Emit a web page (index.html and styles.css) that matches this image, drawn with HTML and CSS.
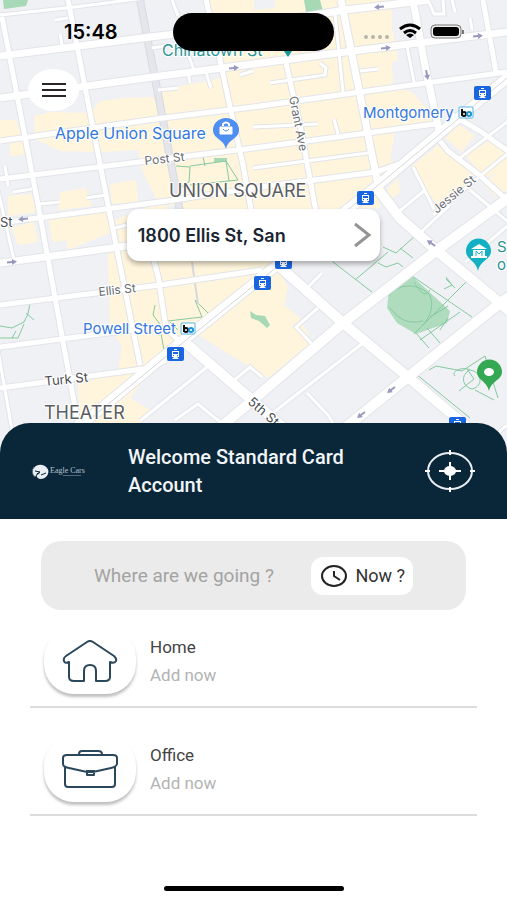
FILE: index.html
```html
<!DOCTYPE html>
<html lang="en">
<head>
  <meta charset="UTF-8" />
  <meta name="viewport" content="width=device-width, initial-scale=1.0"/>
  <title>Eagle Cars</title>
  <link rel="stylesheet" href="styles.css">
</head>
<body>
  <div class="app">
    <section class="map">
      <svg class="map-canvas" viewBox="0 0 507 450" preserveAspectRatio="xMidYMid slice" role="img" aria-label="Map">
        <defs>
          <g id="roads">
            <!-- west to east -->
            <path class="small" d="M0 15L75 7L145 -2"/>
            <path class="wide" d="M0 56L150 37L253 25L345 10L430 0"/>
            <path class="wide" d="M0 98L153 77L253 64L353 51L507 32"/>
            <path class="mid" d="M0 141L163 118L253 107L353 93L507 72"/>
            <path class="mid" d="M0 179L254 148L435 124"/>
            <path class="mid" d="M0 223L167 201L253 188L376 172L410 160"/>
            <path class="wide" d="M0 263L127 246L253 228L340 216"/>
            <path class="mid" d="M0 305L160 285L262 270"/>
            <path class="mid" d="M0 347L100 334L140 329"/>
            <path class="mid" d="M0 388L150 368L166 360"/>
            <path class="small" d="M253 127L318 124M253 168L368 153M152 48L165 46M253 71L240 75"/>
            <path class="small" d="M13 192L32 189M40 204L60 202M86 198L106 195M158 90L178 88M55 20L68 18M60 34L62 45M270 83L325 75L326 68L320 63M360 71L378 69"/>
            <path class="small" d="M188 72L190 83M206 72L211 88M188 54L194 70M334 119L338 134M428 0L434 14L444 14L443 0M452 0L455 12M470 18L472 30M115 228L127 225"/>
            <!-- north to south -->
            <path class="mid" d="M2 17L40 215L78 424"/>
            <path class="small" d="M-2 190L14 260M-2 350L12 430M5 166L8 186"/>
            <path class="mid" d="M68 0L110 215L140 365"/>
            <path class="mid" d="M143 220L158 276L166 328L180 342"/>
            <path class="mid" d="M206 0L219 55L230 107L243 165L252 215"/>
            <path class="mid" d="M286 63L301 130L316 212"/>
            <path class="wide" d="M341 0L362 105L378 185"/>
            <path class="wide" d="M413 0L425 66L440 135"/>
            <path class="mid" d="M483 0L496 72"/>
            <path class="small" d="M172 0L178 16M335 14L343 92M407 46L414 82"/>
            <!-- south of market -->
            <path class="big" d="M180 338L254 402L300 442"/>
            <path class="big" d="M280 267L343 323L408 377L480 438"/>
            <path class="big" d="M374 184L400 218L436 250L500 303L515 316"/>
            <path class="big" d="M205 440L253 400L343 323L436 251L515 193"/>
            <path class="big" d="M330 440L408 377L500 303L515 293"/>
            <path class="mid" d="M452 115L480 131L512 154M440 141L448 151L478 174L507 200"/>
            <path class="small" d="M274 412L363 343M140 421L207 367M175 420L198 404L220 422M232 382L250 367L262 377"/>
            <path class="small" d="M413 167L434 209M396 214L425 190M460 158L512 118M433 215L512 150M470 190L512 225M308 287L322 273M313 345L296 327L318 308"/>
            <path class="small" d="M420 233L450 205M465 262L512 222M307 393L328 415L334 425M490 440L507 425"/>
            <path class="big" d="M512 74L440 133L376 187L262 277L180 343L80 426"/>
          </g>
          <g id="tram">
            <rect width="17" height="14" rx="2" fill="#1a66e0"/>
            <path d="M7 2h3v1h-3zM5 4h7v6h-7zM5 12l2-2h3l2 2z" fill="#fff"/>
            <path d="M6 5h5v2h-5zM6 8h1v1h-1zM10 8h1v1h-1z" fill="#1a66e0"/>
          </g>
          <g id="bart">
            <rect x="1" y="1" width="14" height="11" rx="1" fill="#fff" stroke="#56b4e8"/>
            <path d="M4 3v7" stroke="#111" stroke-width="2"/>
            <circle cx="6" cy="8" r="2" fill="none" stroke="#111" stroke-width="2"/>
            <circle cx="11" cy="8" r="2" fill="none" stroke="#2196d6" stroke-width="2"/>
            <path d="M13 6v4" stroke="#2196d6" stroke-width="1"/>
          </g>
          <path id="arrow" d="M-5 -1h5v-2l5 3l-5 3v-2h-5z" fill="#9899bd"/>
        </defs>

        <rect width="507" height="450" fill="#f0f1f4"/>
        <!-- shopping blocks -->
        <g fill="#fff5dc">
          <path d="M210 0H392V28L398 60L392 86L412 92L436 120L395 132L390 160L400 168L376 187L262 277L166 350L130 398L150 410L140 425H80L78 384L118 372L122 345L110 330L108 255L120 240L115 220L158 203L142 170L138 150L100 152L60 151L35 139L34 116L50 112L90 113L100 101L125 98L155 97L165 90L190 84L215 80L230 70L205 30Z"/>
          <path d="M0 120L16 120L22 137L0 138ZM10 140L24 139L25 155L10 156ZM60 192L86 188L92 206L58 210ZM110 184L136 180L138 202L112 204ZM8 196L32 194L36 212L8 216Z"/>
          <path d="M48 213L106 206L112 232L68 250L52 240ZM12 227L34 222L38 242L18 245Z"/>
          <path d="M280 272L288 287L284 305L300 318L312 342L268 378L190 330L256 280Z"/>
          <path d="M412 166L438 145L455 160L474 174L460 193L444 211L425 190ZM445 138L459 124L474 136L462 152ZM465 155L490 140L507 155V170L485 178ZM482 183L507 168V190L496 197ZM388 188L398 178L400 192L386 204ZM340 198L376 192L380 208H330Z"/>
        </g>
        <g fill="#f0f1f4">
          <path d="M254 0H275V8L254 10ZM392 62L412 58L418 82L393 84ZM392 6L408 4L412 25L394 28ZM50 243L66 240L68 250L50 251ZM165 205L180 206L172 214Z"/>
        </g>
        <!-- parks -->
        <g fill="#a7d9b7">
          <path d="M3 0H28L26 6L4 9ZM304 0L320 0L323 11L306 12Z" />
          <path d="M412 276L450 311L447 323L416 334L397 323L387 308L389 290Z" opacity=".9"/>
          <path d="M214 158H227V162H214ZM250 311L256 315L265 316L270 325L267 328L259 321L251 318Z"/>
        </g>
        <g class="trails">
          <path d="M176 166L190 167L189 182L180 188M190 166L226 161L229 181M190 185L238 180L226 161M203 157L205 166M0 326L12 328L24 322L28 314L30 303M26 313L34 320M0 338L18 338L24 324M12 338L16 331"/>
          <path d="M155 305L153 315L159 323L164 350M168 321L202 317L195 300L212 317M163 350L178 338M170 322L178 330"/>
          <path d="M383 247L396 253L415 236M333 262L372 292M355 280L388 252M378 263L386 267L398 263L403 267M400 248L413 258"/>
          <path d="M412 276L472 317M414 334L468 280M416 333L429 348M427 328L440 343M448 318L440 330M420 340L460 312M444 289L452 285L446 277M446 279L455 288M389 296C397 284 416 282 429 294C435 305 430 318 421 327M414 282C420 292 425 298 430 290M390 308C404 326 416 322 423 321M430 317L448 306"/>
          <path d="M429 370L436 366L462 371L485 356L498 398M459 391L474 379L467 369M416 374L470 418M455 376C450 371 464 366 470 370C482 372 484 386 472 389C461 386 461 374 470 370M475 390L494 400"/>
        </g>

        <path d="M140 0L163 120L180 212" class="powell-edge"/>
        <path d="M140 0L163 120L180 212" class="powell"/>
        <path d="M192 262L198 304" stroke="#d7d9de" stroke-width="2"/>
        <use href="#roads" class="road-edge"/>
        <use href="#roads" class="road-fill"/>
        <path d="M507 78L440 134L376 187L262 279L180 345L90 419" fill="none" stroke="#d4d6dc"/>

        <use href="#arrow" transform="translate(234 68) rotate(-5)"/>
        <use href="#arrow" transform="translate(379 7) rotate(175)"/>
        <use href="#arrow" transform="translate(386 48) rotate(-5)"/>
        <use href="#arrow" transform="translate(478 36) rotate(-5)"/>
        <use href="#arrow" transform="translate(427 75) rotate(80)"/>
        <use href="#arrow" transform="translate(23 219) rotate(175)"/>
        <use href="#arrow" transform="translate(12 262) rotate(-5)"/>
        <use href="#arrow" transform="translate(431 243) rotate(215)"/>
        <use href="#arrow" transform="translate(391 390) rotate(142)"/>
        <use href="#arrow" transform="translate(361 415) rotate(142)"/>

        <use href="#tram" x="474" y="86"/>
        <use href="#tram" x="357" y="191"/>
        <use href="#tram" x="275" y="255"/>
        <use href="#tram" x="254" y="276"/>
        <use href="#tram" x="167" y="347"/>
        <use href="#tram" x="449" y="417"/>
        <use href="#bart" x="458" y="106"/>
        <use href="#bart" x="180" y="322"/>

        <path d="M226 149C224 139 213 139 213 130A13 12 0 0 1 239 130C239 139 228 139 226 149Z" fill="#4f8ff0"/>
        <path d="M220 127h12v7h-12z" fill="#fff" stroke="#fff"/>
        <path d="M223 126v-2q3 -3 6 0v2" fill="none" stroke="#fff" stroke-width="2"/>
        <path d="M223 129q3 4 6 0" fill="none" stroke="#4f8ff0"/>
        <path d="M478 271C476 260 466 260 466 251A12 12 0 0 1 491 251C491 260 480 260 478 271Z" fill="#13b0c3"/>
        <path d="M471 249l8-5l8 5zM473 250h12v6h-12zM471 256h16v2h-16z" fill="#fff"/>
        <path d="M476 256v-5l3 3l3-3v5" fill="none" stroke="#13b0c3"/>
        <path d="M489 391C487 381 477 380 477 372A12 12 0 0 1 502 372C502 380 491 381 489 391Z" fill="#34a853"/>
        <ellipse cx="489" cy="372" rx="5" ry="4" fill="#fff"/>
        <path d="M284 51h8l-4 6z" fill="#129a9a"/>

        <text class="place teal large" x="162" y="56">Chinatown St</text>
        <text class="place large" x="55" y="139">Apple Union Square</text>
        <text class="place" x="363" y="118">Montgomery</text>
        <text class="place" x="83" y="334">Powell Street</text>
        <text class="place teal" x="497" y="252">S</text>
        <text class="place teal" x="497" y="270">o</text>
        <text class="district" x="169" y="197">UNION SQUARE</text>
        <text class="district" x="44" y="419">THEATER</text>
        <text class="street" transform="translate(145 165) rotate(-6)">Post St</text>
        <text class="street" transform="translate(99 296) rotate(-6)">Ellis St</text>
        <text class="street dark" transform="translate(45 386) rotate(-6)">Turk St</text>
        <text class="street dark" x="0" y="227">St</text>
        <text class="street" transform="translate(289 97) rotate(79)">Grant Ave</text>
        <text class="street" transform="translate(437 214) rotate(-40)">Jessie St</text>
        <text class="street dark" transform="translate(247 403) rotate(41)">5th St</text>
      </svg>

      <div class="status-bar">
        <span class="time">15:48</span>
        <span class="island"></span>
        <svg class="signals" width="104" height="24" viewBox="0 0 104 24" aria-hidden="true">
          <g fill="#b7b4ab">
            <circle cx="3" cy="17" r="2"/><circle cx="10" cy="17" r="2"/><circle cx="17" cy="17" r="2"/><circle cx="24" cy="17" r="2"/>
          </g>
          <g fill="none" stroke="#000" stroke-width="3">
            <path d="M37 9Q47 1 57 9"/>
            <path d="M41 13Q47 8 53 13"/>
          </g>
          <path d="M43 15Q47 12 51 15L47 18Z"/>
          <rect x="68" y="5" width="30" height="13" rx="4" fill="#eee" stroke="#777"/>
          <rect x="70" y="7" width="26" height="9" rx="3"/>
          <path d="M100 10v4" stroke="#777" stroke-width="2"/>
        </svg>
      </div>

      <button class="menu-btn" type="button" aria-label="Menu">
        <svg width="26" height="16" viewBox="0 0 26 16"><path d="M1 2h24M1 8h24M1 14h24" stroke="#2b2526" stroke-width="2"/></svg>
      </button>

      <button class="address" type="button">
        <span>1800 Ellis St, San</span>
        <svg width="20" height="26" viewBox="0 0 20 26"><path d="M3 2L17 13L3 24" fill="none" stroke="#949494" stroke-width="3"/></svg>
      </button>
    </section>

    <header class="welcome">
      <div class="logo">
        <svg width="19" height="17" viewBox="0 0 19 17" aria-hidden="true">
          <path d="M4 14A8 7 0 1 1 17 11Q15 16 9 16Q5 15 6 12L9 10L5 10Q3 8 6 5L9 5Q6 2 11 2" fill="#e9eef2"/>
          <path d="M4 14Q-1 9 3 4" fill="none" stroke="#52687a"/>
          <path d="M4 8l5 1l-3 2M10 12l5-2" fill="none" stroke="#0a2639"/>
        </svg>
        <div class="logo-name">Eagle Cars<small></small></div>
      </div>
      <h1>Welcome Standard Card Account</h1>
      <button class="locate" type="button" aria-label="My location">
        <svg width="50" height="42" viewBox="0 0 50 42">
          <ellipse cx="25" cy="21" rx="22" ry="18" fill="none" stroke="#e8edf1" stroke-width="2"/>
          <path d="M25 0v5M25 37v5M0 21h5M45 21h5M25 12v18M14 21h22" stroke="#fff" stroke-width="2"/>
          <ellipse cx="25" cy="21" rx="6" ry="5" fill="#fff"/>
        </svg>
      </button>
    </header>

    <main class="content">
      <div class="search">
        <input type="text" aria-label="Destination" placeholder="Where are we going ?">
        <button class="now-btn" type="button">
          <svg width="26" height="22" viewBox="0 0 26 22" aria-hidden="true">
            <ellipse cx="13" cy="11" rx="12" ry="10" fill="none" stroke="#222" stroke-width="2"/>
            <path d="M13 6v5l6 4" fill="none" stroke="#222" stroke-width="2"/>
          </svg>
          Now ?
        </button>
      </div>

      <a class="saved" href="#">
        <span class="saved-icon">
          <svg width="56" height="44" viewBox="0 0 56 44" aria-hidden="true">
            <path d="M25 3Q28 1 31 3L52 17Q55 20 54 22Q52 25 48 23V38Q48 42 43 42H34V32Q34 26 28 26Q22 26 22 32V42H12Q7 42 7 38V23Q3 25 2 22Q1 19 4 17Z"/>
          </svg>
        </span>
        <span class="saved-text">
          <span class="saved-name">Home</span>
          <span class="saved-note">Add now</span>
        </span>
      </a>
      <a class="saved" href="#">
        <span class="saved-icon">
          <svg width="56" height="44" viewBox="0 0 56 44" aria-hidden="true">
            <path d="M17 8V7Q17 4 20 4H36Q40 4 40 7V8M5 8H51Q55 8 55 11V17Q54 20 49 21L31 25H25L7 21Q1 20 1 17V11Q1 8 5 8ZM3 20V37Q3 40 6 40H50Q53 40 53 37V20M25 24H32V28H25Z"/>
          </svg>
        </span>
        <span class="saved-text">
          <span class="saved-name">Office</span>
          <span class="saved-note">Add now</span>
        </span>
      </a>
    </main>

    <div class="home-bar"></div>
  </div>
</body>
</html>
```

FILE: styles.css
```css
* {
  box-sizing: border-box;
}
body {
  margin: 0;
  font-family: Roboto, Arial, sans-serif;
  background-color: #fff;
}
button {
  border: 0;
  padding: 0;
  font-family: inherit;
  cursor: pointer;
}
.app {
  display: flex;
  flex-direction: column;
  min-height: 100vh;
}

/* map */
.map {
  position: relative;
}
.map-canvas {
  display: block;
  width: 100%;
  height: 450px;
}
.road-edge {
  --edge: 2px;
  stroke: #e2e4e9;
  fill: none;
}
.road-fill {
  --edge: 0px;
  stroke: #fff;
  fill: none;
}
.small {
  stroke-width: calc(3px + var(--edge));
}
.mid {
  stroke-width: calc(5px + var(--edge));
}
.wide {
  stroke-width: calc(7px + var(--edge));
}
.big {
  stroke-width: calc(10px + var(--edge));
}
.powell {
  fill: none;
  stroke: #e5e6eb;
  stroke-width: 6px;
}
.powell-edge {
  fill: none;
  stroke: #d8dae0;
  stroke-width: 8px;
}
.trails {
  fill: none;
  stroke: #86c9a0;
  stroke-width: 1px;
}
.place,
.district,
.street {
  font-family: Inter, Arial, sans-serif;
  stroke: #fff;
  stroke-width: 2px;
  paint-order: stroke;
}
.place {
  font-size: 15px;
  fill: #3478de;
}
.place.large {
  font-size: 16px;
}
.place.teal {
  fill: #2b9494;
}
.district {
  font-size: 18px;
  fill: #5a5d61;
}
.street {
  font-size: 12px;
  fill: #6a6d72;
}
.street.dark {
  font-size: 13px;
  fill: #4b4d51;
}

/* things on top of the map */
.status-bar {
  position: absolute;
  top: 13px;
  left: 0;
  right: 0;
  display: grid;
  grid-template-columns: 1fr 161px 1fr;
  align-items: center;
}
.time {
  padding-left: 64px;
  font-family: Inter, Arial, sans-serif;
  font-size: 20px;
  font-weight: 600;
}
.island {
  height: 38px;
  border-radius: 19px;
  background-color: #000;
}
.signals {
  justify-self: end;
  margin-right: 40px;
}
.menu-btn {
  position: absolute;
  top: 69px;
  left: 28px;
  width: 51px;
  height: 42px;
  display: flex;
  align-items: center;
  justify-content: center;
  border-radius: 50%;
  background-color: #fff;
}
.address {
  position: absolute;
  top: 209px;
  left: 25%;
  right: 25%;
  height: 52px;
  display: flex;
  align-items: center;
  justify-content: space-between;
  padding: 0 8px 0 11px;
  border-radius: 12px;
  background-color: #fff;
  box-shadow: 0 3px 5px rgba(0,0,0,0.3);
  color: #1b2533;
  font-family: Inter, Arial, sans-serif;
  font-size: 18px;
  font-weight: 600;
}

/* welcome header */
.welcome {
  position: relative;
  display: flex;
  align-items: center;
  margin-top: -27px;
  padding: 20px 32px 20px 31px;
  border-radius: 30px 30px 0 0;
  background-color: #0a2639;
}
.logo {
  display: flex;
  align-items: center;
  width: 97px;
}
.logo-name {
  font-family: "Liberation Serif", serif;
  font-size: 8px;
  color: #b8c4ce;
}
.logo-name small {
  display: block;
  width: 18px;
  margin-left: 13px;
  border-top: 1px solid #52687a;
}
.welcome h1 {
  flex: 1;
  margin: 0;
  padding-right: 60px;
  font-size: 20px;
  line-height: 28px;
  font-weight: 500;
  color: #f1f5f8;
}
.locate {
  height: 42px;
  background: none;
}

/* search and saved places */
.content {
  flex: 1;
  padding: 22px 30px 0;
}
.search {
  display: flex;
  align-items: center;
  justify-content: space-between;
  height: 69px;
  margin: 0 11px;
  padding: 0 53px;
  border-radius: 20px;
  background-color: #ebebeb;
}
.search input {
  flex: 1;
  min-width: 0;
  padding: 0;
  border: 0;
  outline: 0;
  background: none;
  font-family: inherit;
  font-size: 19px;
  color: #333;
}
.search input::placeholder {
  color: #a3a3a3;
  opacity: 1;
}
.now-btn {
  display: flex;
  align-items: center;
  gap: 8px;
  height: 38px;
  padding: 0 8px 0 10px;
  border-radius: 12px;
  background-color: #fff;
  font-size: 18px;
  color: #333;
}
.saved {
  display: flex;
  align-items: flex-end;
  gap: 14px;
  height: 98px;
  margin-bottom: 10px;
  padding: 0 14px 12px;
  border-bottom: 2px solid #dcdcdc;
  text-decoration: none;
}
.saved-icon {
  display: flex;
  align-items: center;
  justify-content: center;
  width: 92px;
  height: 66px;
  border-radius: 30px;
  background-color: #fff;
  box-shadow: 0 3px 3px rgba(0,0,0,0.25);
}
.saved-icon svg {
  fill: none;
  stroke: #2b475c;
  stroke-width: 2px;
  stroke-linejoin: round;
}
.saved-text {
  display: flex;
  flex-direction: column;
  padding-bottom: 5px;
  font-size: 17px;
  line-height: 28px;
}
.saved-name {
  color: #444;
}
.saved-note {
  color: #b3b3b3;
}
.home-bar {
  width: 180px;
  height: 5px;
  margin: 0 auto 9px;
  border-radius: 3px;
  background-color: #000;
}
```
